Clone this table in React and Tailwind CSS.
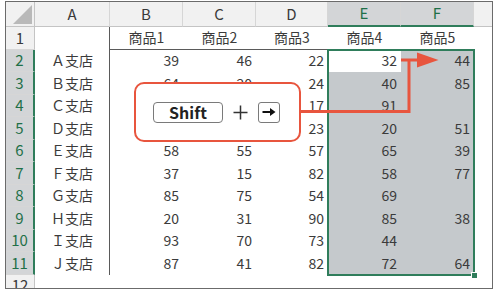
// Spreadsheet shortcut illustration: Shift + → extends selection E2:F11

const FONT = "font-['Noto_Sans_CJK_JP','Noto_Sans',sans-serif]"

const COLS = ['A', 'B', 'C', 'D', 'E', 'F']

// B4:C5 sit under the callout, so they are left empty
const ROWS = [
  ['Ａ支店', 39, 46, 22, 32, 44],
  ['Ｂ支店', 64, 20, 24, 40, 85],
  ['Ｃ支店', '', '', 17, 91, ''],
  ['Ｄ支店', '', '', 23, 20, 51],
  ['Ｅ支店', 58, 55, 57, 65, 39],
  ['Ｆ支店', 37, 15, 82, 58, 77],
  ['Ｇ支店', 85, 75, 54, 69, ''],
  ['Ｈ支店', 20, 31, 90, 85, 38],
  ['Ｉ支店', 93, 70, 73, 44, ''],
  ['Ｊ支店', 87, 41, 82, 72, 64],
]

function ColHeader({ label, selected }) {
  return (
    <div
      className={`flex items-center justify-center text-[15px] border-r border-[#d6d6d6] ${
        selected
          ? 'bg-[#d3d5d7] text-[#1f7048] border-b-2 border-b-[#2f7d5b]'
          : 'bg-[#f1f1f1] text-[#3a3a3a] border-b border-b-[#c4c4c4]'
      }`}>
      {label}
    </div>
  )
}

function RowHeader({ n, selected }) {
  return (
    <div
      className={`flex items-center justify-center text-[15px] border-b border-[#d6d6d6] ${
        selected
          ? 'bg-[#d3d5d7] text-[#1f7048] border-r-2 border-r-[#2f7d5b]'
          : 'bg-[#f1f1f1] text-[#3a3a3a] border-r border-r-[#c4c4c4]'
      }`}>
      {n}
    </div>
  )
}

function Num({ v, className = '' }) {
  return (
    <div className={`flex items-center justify-end pr-[4px] text-[14px] text-[#3b3b3b] ${className}`}>{v}</div>
  )
}

export default function App() {
  return (
    <div className={`relative w-[500px] h-[295px] bg-white pl-[5px] pt-[1px] ${FONT}`}>
      <div className="w-[488px] h-[288px] border border-[#6b6b6b] overflow-hidden">
        <div className="grid grid-cols-[29px_75px_73px_73px_72px_73px_73px_1fr] grid-rows-[25px_repeat(11,22.5px)_1fr] h-full">
          {/* corner */}
          <div className="bg-[#f1f1f1] border-r border-b border-[#c4c4c4] flex items-end justify-end p-[2px]">
            <svg width="19" height="19" viewBox="0 0 19 19">
              <polygon points="19,0 19,19 0,19" fill="#b9b9b9" />
            </svg>
          </div>
          {COLS.map(c => (
            <ColHeader key={c} label={c} selected={c === 'E' || c === 'F'} />
          ))}
          <div className="bg-[#f1f1f1] border-b border-[#c4c4c4]" />

          {/* row 1 */}
          <RowHeader n={1} />
          <div className="border-r border-[#5a5a5a]" />
          {[1, 2, 3, 4, 5].map(i => (
            <div key={i} className="flex items-center justify-center text-[14px] text-[#3b3b3b] border-b border-[#5a5a5a]">
              商品{i}
            </div>
          ))}
          <div />

          {/* selected block E2:F11 */}
          <div className="col-start-6 col-end-8 row-start-3 row-end-13 relative z-10 grid grid-cols-2 grid-rows-[repeat(10,22.5px)] outline-2 outline-[#2f7d5b] -outline-offset-1 bg-[#c5c9cc]">
            {ROWS.map((r, i) => [
              <Num key={`e${i}`} v={r[4]} className={i === 0 ? 'bg-white' : ''} />,
              <Num key={`f${i}`} v={r[5]} />,
            ])}
            <div className="absolute -right-[4px] -bottom-[4px] w-[7px] h-[7px] bg-[#2f7d5b] border border-white" />
          </div>

          {/* rows 2-11 */}
          {ROWS.map((r, i) => [
            <RowHeader key={`h${i}`} n={i + 2} selected />,
            <div key={`a${i}`} className="flex items-center justify-center text-[14px] text-[#3b3b3b] border-r border-[#5a5a5a]">
              {r[0]}
            </div>,
            <Num key={`b${i}`} v={r[1]} />,
            <Num key={`c${i}`} v={r[2]} />,
            <Num key={`d${i}`} v={r[3]} />,
            <div key={`g${i}`} />,
          ])}

          {/* row 12 */}
          <div className="bg-[#f1f1f1] border-r border-[#c4c4c4] flex justify-center pt-[2px] text-[15px] text-[#3a3a3a] leading-none">
            12
          </div>
        </div>
      </div>

      {/* callout */}
      <div className="absolute left-[134px] top-[82px] w-[167px] h-[60px] bg-white border-2 border-[#e8553e] rounded-[10px] z-20 flex items-center pl-[17px]">
        <div className="w-[70px] h-[21px] border border-[#7a7a7a] rounded-[4px] flex items-center justify-center font-semibold text-[16px] text-[#222]">
          Shift
        </div>
        <div className="w-[35px] flex justify-center">
          <svg width="15" height="15" viewBox="0 0 15 15">
            <path d="M7.5 0.5V14.5M0.5 7.5H14.5" stroke="#333" strokeWidth="1.5" />
          </svg>
        </div>
        <div className="w-[22px] h-[21px] border border-[#7a7a7a] rounded-[3px] flex items-center justify-center">
          <svg width="14" height="10" viewBox="0 0 14 10">
            <path d="M0.5 5H10" stroke="#111" strokeWidth="2" />
            <polygon points="8,1 13.5,5 8,9" fill="#111" />
          </svg>
        </div>
      </div>

      {/* red arrow */}
      <svg className="absolute left-0 top-0 z-30 pointer-events-none" width="500" height="295" viewBox="0 0 500 295">
        <path d="M300 111.5H409V60M401 60H420" fill="none" stroke="#e8553e" strokeWidth="3" />
        <polygon points="417,52.5 438.5,60 417,67.5" fill="#e8553e" />
      </svg>
    </div>
  )
}
